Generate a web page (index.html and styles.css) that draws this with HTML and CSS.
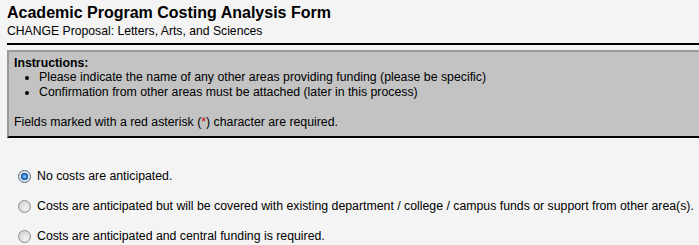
FILE: index.html
```html
<!DOCTYPE html>
<html>
<head>
<meta charset="utf-8">
<link rel="stylesheet" href="styles.css">
</head>
<body>
<div class="page">
  <h1 class="title">Academic Program Costing Analysis Form</h1>
  <div class="subtitle">CHANGE Proposal: Letters, Arts, and Sciences</div>
  <div class="rule"></div>
  <div class="instructions">
    <div class="ins-head">Instructions:</div>
    <ul class="ins-list">
      <li>Please indicate the name of any other areas providing funding (please be specific)</li>
      <li>Confirmation from other areas must be attached (later in this process)</li>
    </ul>
    <div class="ins-note">Fields marked with a red asterisk (<span class="req">*</span>) character are required.</div>
  </div>
  <div class="options">
    <label class="opt"><input class="radio" type="radio" name="cost" checked> No costs are anticipated.</label>
    <label class="opt"><input class="radio" type="radio" name="cost"> Costs are anticipated but will be covered with existing department / college / campus funds or support from other area(s).</label>
    <label class="opt"><input class="radio" type="radio" name="cost"> Costs are anticipated and central funding is required.</label>
  </div>
</div>
</body>
</html>
```
FILE: styles.css
```css
html, body {
  margin: 0;
  padding: 0;
  background: #f4f4f4;
  overflow: hidden;
}
body {
  font-family: "Liberation Sans", Arial, sans-serif;
  font-size: 12.3px;
  color: #000;
}
.page {
  padding: 3px 0 0 7px;
  width: 720px;
}
.title {
  margin: 0;
  font-size: 16px;
  font-weight: bold;
  line-height: 19px;
}
.subtitle {
  font-size: 12.2px;
  line-height: 16px;
  margin-top: 1px;
}
.rule {
  height: 0;
  border-top: 2px solid #000;
  margin-top: 4px;
}
.instructions {
  margin-top: 5px;
  background: #c3c3c3;
  border-top: 2px solid #9a9a9a;
  border-left: 2px solid #9a9a9a;
  border-bottom: 2px solid #000;
  padding: 4px 0 7px 5px;
}
.ins-head {
  font-weight: bold;
  line-height: 14px;
}
.ins-list {
  margin: 0;
  padding-left: 25px;
}
.ins-list li {
  line-height: 15px;
}
.ins-note {
  margin-top: 15px;
  line-height: 14px;
}
.req {
  color: #c00000;
}
.options {
  padding-top: 30px;
  display: flex;
  flex-direction: column;
  gap: 14px;
}
.opt {
  display: flex;
  align-items: center;
  line-height: 16px;
}
.radio {
  appearance: none;
  -webkit-appearance: none;
  margin: 0 6px 0 11px;
  width: 13px;
  height: 13px;
  border-radius: 50%;
  border: 1px solid #8e8f8f;
  background: radial-gradient(circle at 60% 65%, #f4f4f4 0%, #dcdcdc 55%, #c8c8c8 100%);
  box-sizing: border-box;
  position: relative;
}
.radio:checked {
  border-color: #5a6f8a;
  background: radial-gradient(circle at 50% 50%, #9fd0ff 0%, #2a7fd8 28%, #1a4f94 44%, #e6e6e6 50%, #d4d4d4 100%);
}
```
